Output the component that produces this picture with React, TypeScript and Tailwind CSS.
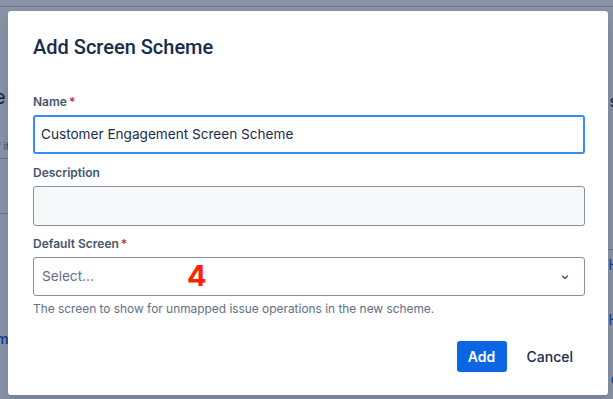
import React from "react";

function Field({
  label,
  required,
  children,
}: {
  label: string;
  required?: boolean;
  children: React.ReactNode;
}) {
  return (
    <div className="flex flex-col">
      <label className="text-[12px] leading-[16px] font-semibold text-[#44546f] mb-[5px]">
        {label}
        {required && <span className="text-[#c9372c] ml-[2px]">*</span>}
      </label>
      {children}
    </div>
  );
}

export default function App() {
  return (
    <div
      className="relative w-[613px] h-[399px] overflow-hidden bg-white"
      style={{ fontFamily: "Inter, 'Noto Sans', sans-serif" }}
    >
      {/* page behind the dialog */}
      <div className="h-[7px] border-b border-[#c1c7d0]" />
      <div className="flex justify-between h-[392px]">
        <div className="w-[10px] flex flex-col">
          <div className="mt-[80px] text-[20px] leading-[20px] text-[#172b4d] -ml-[6px]">e</div>
          <div className="mt-[32px] text-[10px] text-[#626f86] -ml-[3px]">f it</div>
          <div className="mt-[4px] border-b border-[#c1c7d0]" />
          <div className="mt-[54px] border-b border-[#c1c7d0]" />
          <div className="mt-[114px] text-[14px] font-semibold text-[#0c66e4] -ml-[4px]">m</div>
        </div>
        <div className="w-[10px] flex flex-col items-end">
          <div className="mt-[82px] text-[16px] text-[#172b4d] -mr-[5px]">s</div>
          <div className="mt-[136px] w-full border-b border-[#c1c7d0]" />
          <div className="mt-[4px] text-[14px] text-[#0c66e4] -mr-[6px]">H</div>
          <div className="mt-[34px] text-[14px] text-[#0c66e4] -mr-[6px]">H</div>
          <div className="mt-[38px] text-[14px] text-[#0c66e4] -mr-[6px]">e</div>
        </div>
      </div>

      {/* blanket + modal */}
      <div className="absolute inset-0 bg-[rgba(9,30,66,0.48)] pt-[11px] pl-[8px]">
        <div className="w-[600px] h-[384px] bg-white rounded-[3px] shadow-[0_8px_12px_rgba(9,30,66,0.15)] pl-[25px] pr-[23px] pt-[24px] flex flex-col">
          <h1 className="text-[20px] leading-[24px] font-medium text-[#172b4d] font-[Roboto,sans-serif]">Add Screen Scheme</h1>

          <div className="mt-[35px] flex flex-col gap-[11px]">
            <Field label="Name" required>
              <div className="h-[39px] rounded-[3px] border-2 border-[#388bff] bg-white flex items-center px-[6px]">
                <span className="text-[13.6px] text-[#172b4d]">Customer Engagement Screen Scheme</span>
              </div>
            </Field>
            <Field label="Description">
              <div className="h-[40px] rounded-[3px] border border-[#8590a2] bg-[#f7f8f9]" />
            </Field>
            <div className="flex flex-col -mt-[1px]">
              <Field label="Default Screen" required>
                <div className="relative h-[39px] rounded-[3px] border border-[#8590a2] bg-white flex items-center pl-[8px] pr-[13px]">
                  <span className="text-[13.6px] text-[#626f86] flex-1">Select...</span>
                  <span className="absolute left-[153px] top-[0px] text-[29px] leading-[36px] font-bold text-[#ff2200]">4</span>
                  <svg width="12" height="12" viewBox="0 0 24 24" className="text-[#44546f]">
                    <path d="M7 10l5 5 5-5" fill="none" stroke="currentColor" strokeWidth="2.6" strokeLinecap="round" strokeLinejoin="round" />
                  </svg>
                </div>
              </Field>
              <p className="mt-[5px] text-[11.9px] leading-[16px] text-[#626f86]">
                The screen to show for unmapped issue operations in the new scheme.
              </p>
            </div>
          </div>

          <div className="mt-[24px] flex justify-end items-center gap-[8px]">
            <button className="h-[31px] w-[50px] rounded-[3px] bg-[#0c66e4] text-white text-[14px] font-semibold">Add</button>
            <button className="h-[31px] px-[12px] rounded-[3px] text-[#172b4d] text-[14px] font-medium">Cancel</button>
          </div>
        </div>
      </div>
    </div>
  );
}
